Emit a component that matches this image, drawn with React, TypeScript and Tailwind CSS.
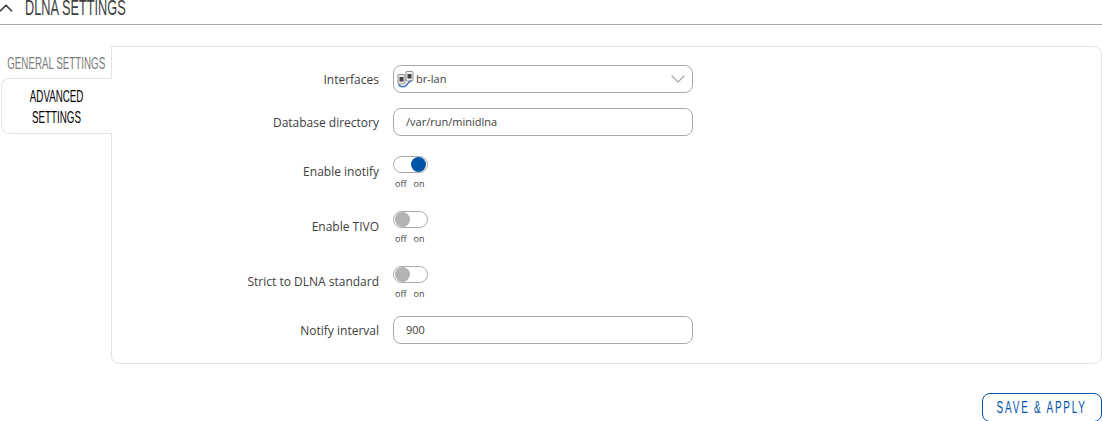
import React from 'react';
import { ChevronUp, ChevronDown } from 'lucide-react';

const bodyFont = "font-['Open_Sans',sans-serif]";
const headFont = "font-['Liberation_Sans',sans-serif]";

const PortIcon: React.FC = () => (
  <svg width="17" height="17" viewBox="0 0 17 17" className="shrink-0">
    <rect x="1" y="3.5" width="7" height="9.5" rx="1" fill="#e8e8e8" stroke="#8f8f8f" />
    <rect x="9" y="0.5" width="7" height="9.5" rx="1" fill="#f0f0f0" stroke="#8f8f8f" />
    <rect x="2.5" y="6" width="4" height="4.5" fill="#444" />
    <rect x="10.5" y="3" width="4" height="4.5" fill="#444" />
    <path d="M1.5 13.5c2 3 6.500 3 8.500 0s3-3.500 4.500-3.500" fill="none" stroke="#3f74b5" strokeWidth="1.5" />
  </svg>
);

const Row: React.FC<{ label: string; className?: string; children: React.ReactNode }> = ({ label, className, children }) => (
  <div className={`flex items-center ${className ?? ''}`}>
    <label className="w-[281px] pt-px pr-[14px] text-right text-[12px] text-[#404040]">{label}</label>
    {children}
  </div>
);

const Toggle: React.FC<{ label: string; on?: boolean }> = ({ label, on }) => (
  <Row label={label} className="h-10">
    <div className="flex h-10 flex-col pt-[5px]">
      <div className={`flex h-[18px] w-[35px] items-center rounded-full border border-[#aaaaaa] bg-white px-px ${on ? 'justify-end' : 'justify-start'}`}>
        <span className={`h-[15px] w-[15px] rounded-full ${on ? 'bg-[#0054a6]' : 'bg-[#b3b3b3]'}`} />
      </div>
      <div className="mt-1 flex gap-[7px] pl-[2px] text-[9px] leading-[14px] text-[#404040]">
        <span>off</span>
        <span>on</span>
      </div>
    </div>
  </Row>
);

const Input: React.FC<{ value: string }> = ({ value }) => (
  <div className="flex h-7 w-[300px] items-center rounded-lg border border-[#aaaaaa] pt-px pl-3 text-[11px] text-[#404040]">
    {value}
  </div>
);

export default function App() {
  return (
    <div className={`h-[421px] w-[1102px] overflow-hidden bg-white ${bodyFont}`}>
      {/* Section title */}
      <div className="flex h-[25px] items-center overflow-hidden border-b border-[#aaaaaa] pb-[9px]">
        <ChevronUp className="-ml-[5px] h-[22px] w-[22px] shrink-0 text-[#404040]" strokeWidth={1.9} />
        <h3 className={`ml-2 origin-left scale-x-[0.58] text-[22px] leading-none whitespace-nowrap text-[#404040] uppercase ${headFont}`}>
          DLNA Settings
        </h3>
      </div>

      <div className="mt-[21px] flex">
        {/* Tabs */}
        <div className={`relative z-10 -mr-px w-[112px] shrink-0 text-center text-[17px] uppercase ${headFont}`}>
          <div className="flex h-[32px] items-center justify-center pt-[3px] text-[#7b7b7b]">
            <span className="shrink-0 scale-x-[0.575] whitespace-nowrap">General settings</span>
          </div>
          <div className="ml-px flex h-[56px] flex-col items-center justify-center rounded-l-lg border border-r-0 border-[#e4e4e4] bg-white pt-[2px] leading-[21px] text-black">
            <span className="scale-x-[0.575] whitespace-nowrap">Advanced</span>
            <span className="scale-x-[0.575] whitespace-nowrap">settings</span>
          </div>
        </div>

        {/* Form panel */}
        <div className="flex h-[318px] flex-1 flex-col gap-[15px] rounded-lg rounded-tl-none border border-[#e4e4e4] pt-[18px]">
          <Row label="Interfaces">
            <div className="flex h-7 w-[300px] items-center rounded-lg border border-[#aaaaaa] pr-[2px] pl-[3px] text-[11px] text-[#404040]">
              <PortIcon />
              <span className="ml-[2px] flex-1 pt-px">br-lan</span>
              <ChevronDown className="h-6 w-6 text-[#aaaaaa]" strokeWidth={1.3} />
            </div>
          </Row>
          <Row label="Database directory">
            <Input value="/var/run/minidlna" />
          </Row>
          <Toggle label="Enable inotify" on />
          <Toggle label="Enable TIVO" />
          <Toggle label="Strict to DLNA standard" />
          <Row label="Notify interval">
            <Input value="900" />
          </Row>
        </div>
      </div>

      <div className="mt-[29px] flex justify-end">
        <button className={`flex h-[29px] w-[120px] items-center justify-center rounded-lg border border-[#0054a6] bg-white text-[#0054a6] uppercase ${headFont}`}>
          <span className="shrink-0 scale-x-[0.62] text-[16px] tracking-[2.9px] whitespace-nowrap">Save &amp; Apply</span>
        </button>
      </div>
    </div>
  );
}
